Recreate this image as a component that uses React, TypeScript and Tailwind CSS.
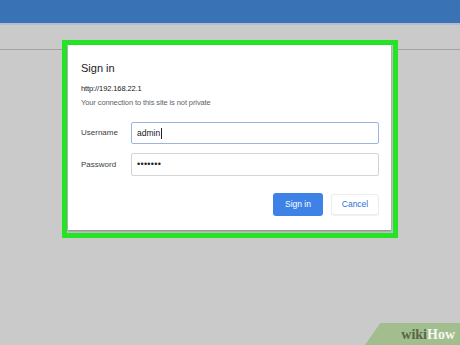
import React from 'react';

const font = { fontFamily: '"Liberation Sans", Arial, sans-serif' };

const SignInDialog: React.FC = () => {
    return (
        <div className="absolute left-[62px] top-[40px] w-[336px] h-[198px] border-[5px] border-[#25e425] bg-[#c4c4c4] pl-px pr-[2px] pb-[3px]">
            <div className="h-full bg-white shadow-[0_1px_2px_rgba(0,0,0,0.35)] flex flex-col pl-[13px] pr-[12px] pt-[15px]">
                <h1 className="text-[11px] leading-[16px] text-[#202124]">Sign in</h1>
                <p className="mt-[7px] text-[7.5px] tracking-[-0.1px] leading-[12px] text-[#202124]">http://192.168.22.1</p>
                <p className="mt-[2px] text-[7.5px] tracking-[-0.1px] leading-[12px] text-[#5f6368]">
                    Your connection to this site is not private
                </p>

                <div className="mt-[13px] flex items-center">
                    <label className="w-[50px] text-[8px] text-[#3c4043]">Username</label>
                    <div className="flex-1 h-[22px] border border-[#9db6e0] rounded-[2px] flex items-center pl-[5px] text-[8.5px] text-[#202124]">
                        admin
                        <span className="ml-px w-px h-[11px] bg-[#202124]" />
                    </div>
                </div>

                <div className="mt-[9px] flex items-center">
                    <label className="w-[50px] text-[8px] text-[#3c4043]">Password</label>
                    <div className="flex-1 h-[23px] border border-[#d4d4d4] rounded-[2px] flex items-center pl-[5px] text-[9px] tracking-[0.3px] text-[#202124]">
                        •••••••
                    </div>
                </div>

                <div className="mt-[17px] flex items-center justify-end gap-[8px]">
                    <button className="w-[50px] h-[23px] rounded-[3px] bg-[#3e82e8] text-white text-[8.5px]">
                        Sign in
                    </button>
                    <button className="w-[48px] h-[21px] rounded-[3px] bg-white border border-[#ececec] shadow-[0_1px_1px_rgba(0,0,0,0.06)] text-[#2a6fd6] text-[8.5px]">
                        Cancel
                    </button>
                </div>
            </div>
        </div>
    );
};

export default function App() {
    return (
        <div className="relative w-[460px] h-[345px] overflow-hidden bg-[#cacaca]" style={font}>
            <div className="h-[23px] bg-[#3a72b6]" />
            <div className="h-[2px] bg-[#b7bccd]" />
            <div className="h-[25px] border-b border-[#a3a3a3]" />

            <SignInDialog />

            <div className="absolute right-0 bottom-0 w-[95px] h-[22px] bg-[#a3be8e] [clip-path:polygon(16%_0,100%_0,100%_100%,0_100%)] flex items-center justify-end pr-[5px] pt-[2px]">
                <span
                    className="text-[14px] font-bold leading-none"
                    style={{ fontFamily: '"Liberation Serif", "Times New Roman", serif' }}
                >
                    <span className="text-[#55694a]">wiki</span>
                    <span className="text-[#f3f7ef]">How</span>
                </span>
            </div>
        </div>
    );
}
